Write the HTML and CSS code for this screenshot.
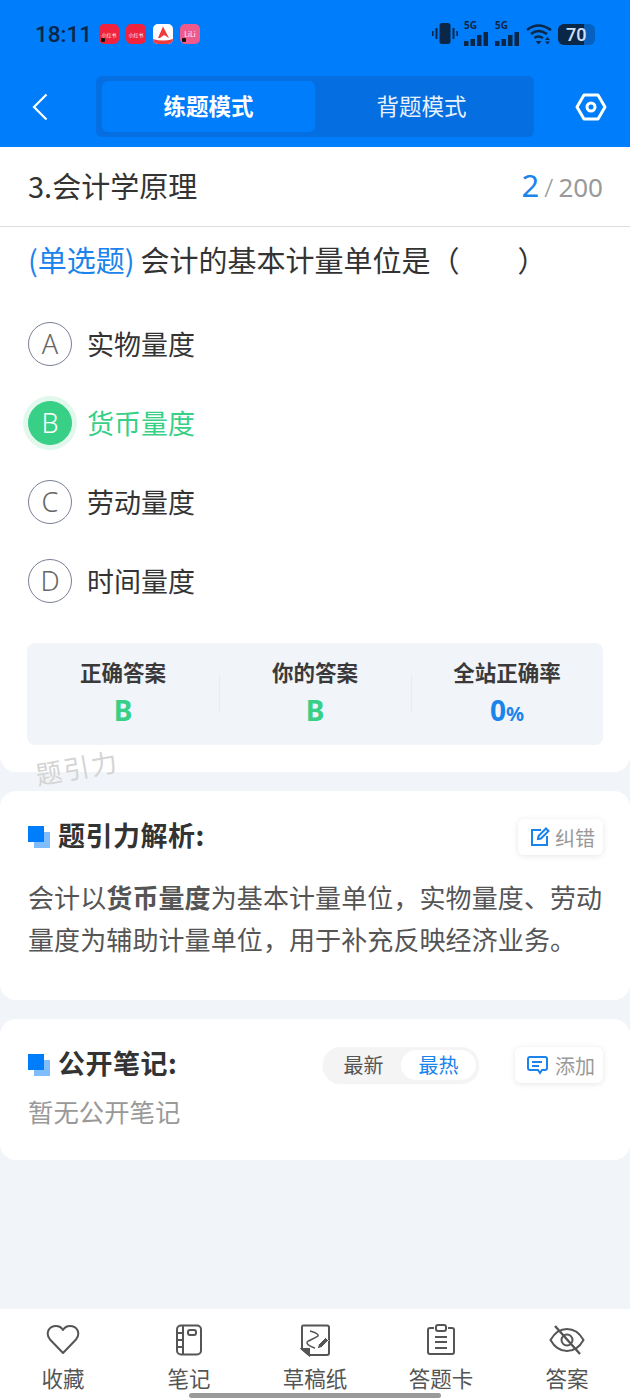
FILE: index.html
```html
<!DOCTYPE html>
<html lang="zh-CN">
<head>
    <meta charset="UTF-8">
    <meta name="viewport" content="width=device-width, initial-scale=1.0">
    <title>题引力</title>
    <link rel="stylesheet" href="styles.css">
</head>
<body>
<div class="page">
    <header class="top">
        <div class="status-bar">
            <span class="time">18:11</span>
            <div class="app-icons">
                <span class="app red">小红书<i class="dot"></i></span>
                <span class="app red">小红书</span>
                <span class="app white">
                    <svg width="20" height="20" viewBox="0 0 20 20"><path d="M10 2.5 L16 14 L11 11 L7 14 L5 14 Z" fill="#ef3b3f"/><path d="M0 15 Q10 18 20 15 V20 H0Z" fill="#ef3b3f"/></svg>
                </span>
                <span class="app pink">LiLi<i class="dot"></i></span>
            </div>
            <div class="status-right">
                <svg width="26" height="22" viewBox="0 0 26 22" fill="#0b2748"><rect x="7.5" y="0" width="11" height="21" rx="2.5"/><rect x="3.5" y="5" width="2" height="11"/><rect x="0" y="8" width="1.6" height="5"/><rect x="20.5" y="5" width="2" height="11"/><rect x="24.4" y="8" width="1.6" height="5"/></svg>
                <div class="signal"><b>5G</b><svg width="25" height="14" viewBox="0 0 25 14" fill="#0b2748"><rect x="0" y="9" width="4.5" height="5"/><rect x="6.5" y="7" width="4.5" height="7"/><rect x="13" y="3" width="4.5" height="11"/><rect x="19.5" y="0" width="4.5" height="14"/></svg></div>
                <div class="signal"><b>5G</b><svg width="25" height="14" viewBox="0 0 25 14" fill="#0b2748"><rect x="0" y="9" width="4.5" height="5"/><rect x="6.5" y="7" width="4.5" height="7"/><rect x="13" y="3" width="4.5" height="11"/><rect x="19.5" y="0" width="4.5" height="14"/></svg></div>
                <svg width="26" height="22" viewBox="0 0 26 22" fill="none" stroke="#0b2748" stroke-width="2.6"><path d="M1 7 Q12 -2 25 7"/><path d="M5 11 Q12 5 21 11"/><path d="M8.5 15 Q12 12 17 15"/><path d="M9.5 18 H15.5 L12.5 21.5Z" fill="#0b2748" stroke="none"/><path d="M19 17 l2.5 -3 l2.5 3Z M19 18.5 l2.5 3 l2.5 -3Z" fill="#0b2748" stroke="none"/></svg>
                <div class="battery"><span class="battery-level"></span><span class="battery-num">70</span></div>
            </div>
        </div>
        <nav class="nav">
            <svg class="back" width="16" height="28" viewBox="0 0 16 28" fill="none" stroke="#fff" stroke-width="2.2"><path d="M14.5 1.5 L2 14 L14.5 26.5"/></svg>
            <div class="tabs">
                <div class="tab active">练题模式</div>
                <div class="tab">背题模式</div>
            </div>
            <svg class="gear" width="32" height="28" viewBox="0 0 32 28" fill="none" stroke="#fff" stroke-width="3"><path d="M9 2 H23 L30 14 L23 26 H9 L2 14Z" stroke-linejoin="round"/><circle cx="16" cy="14" r="4"/></svg>
        </nav>
    </header>

    <section class="question-card">
        <div class="title-row">
            <span class="course">3.会计学原理</span>
            <span class="progress"><em>2</em><i>/</i>200</span>
        </div>
        <p class="stem"><span class="type">(单选题)</span>会计的基本计量单位是（&emsp;&emsp;）</p>
        <ul class="options">
            <li class="option"><span class="letter">A</span>实物量度</li>
            <li class="option correct"><span class="letter">B</span>货币量度</li>
            <li class="option"><span class="letter">C</span>劳动量度</li>
            <li class="option"><span class="letter">D</span>时间量度</li>
        </ul>
        <div class="answer-box">
            <div class="answer-col"><h4>正确答案</h4><strong class="green">B</strong></div>
            <div class="answer-col"><h4>你的答案</h4><strong class="green">B</strong></div>
            <div class="answer-col"><h4>全站正确率</h4><strong class="blue">0<small>%</small></strong></div>
        </div>
    </section>
    <div class="watermark">题引力</div>

    <section class="card analysis">
        <div class="card-head">
            <span class="square"></span>
            <h3>题引力解析:</h3>
            <div class="chip">
                <svg width="20" height="20" viewBox="0 0 20 20" fill="none" stroke="#1b84ec" stroke-width="2"><path d="M11 3 H2 V18 H17 V9"/><path d="M8 12 L8.5 9 L16 1.5 L18.5 4 L11 11.5Z"/></svg>
                纠错
            </div>
        </div>
        <p class="analysis-text">会计以<b>货币量度</b>为基本计量单位，实物量度、劳动量度为辅助计量单位，用于补充反映经济业务。</p>
    </section>

    <section class="card notes">
        <div class="card-head">
            <span class="square"></span>
            <h3>公开笔记:</h3>
            <div class="switch"><span>最新</span><span class="on">最热</span></div>
            <div class="chip chip-wide">
                <svg width="21" height="20" viewBox="0 0 21 20" fill="none" stroke="#1b84ec" stroke-width="2"><path d="M3 2 H18 Q20 2 20 4 V13 Q20 15 18 15 H15 L13 18 L11 15 H3 Q1 15 1 13 V4 Q1 2 3 2Z"/><path d="M5 7 H15 M5 11 H12"/></svg>
                添加
            </div>
        </div>
        <p class="empty">暂无公开笔记</p>
    </section>

    <footer class="bottom-bar">
        <div class="bar-item">
            <svg width="34" height="32" viewBox="0 0 34 32" fill="none" stroke="#555" stroke-width="2"><path d="M17 29 L4 15.5 C-1 9 3 2 10 2 C13 2 15.5 3.5 17 6 C18.5 3.5 21 2 24 2 C31 2 35 9 30 15.5Z" stroke-linejoin="round"/></svg>
            <span>收藏</span>
        </div>
        <div class="bar-item">
            <svg width="28" height="32" viewBox="0 0 28 32" fill="none" stroke="#555" stroke-width="2"><rect x="2" y="1.5" width="24" height="29" rx="4"/><path d="M8 1.5 V30.5 M2 9 H8 M2 16 H8 M2 23 H8"/><rect x="13" y="6" width="8" height="5" rx="2"/></svg>
            <span>笔记</span>
        </div>
        <div class="bar-item">
            <svg width="30" height="32" viewBox="0 0 30 32" fill="none" stroke="#555" stroke-width="2"><path d="M3 1.5 H27 Q29 1.5 29 3.5 V29 Q29 31 27 31 H9 L2 25 V3 Q2 1.5 3 1.5Z"/><path d="M2 25 H9 V31Z" fill="#555"/><path d="M10 7 C14 8 19 10 18 12 C14 15 6 17 7 19 C8 22 12 23 15 24" stroke-width="1.5"/><path d="M17 25 L18.5 20.5 L25.5 13.5 L28.5 16.5 L21.5 23.5Z" fill="#555" stroke="#fff" stroke-width="1"/></svg>
            <span>草稿纸</span>
        </div>
        <div class="bar-item">
            <svg width="28" height="32" viewBox="0 0 28 32" fill="none" stroke="#555" stroke-width="2"><path d="M7 4 H3 Q1 4 1 6 V28 Q1 30 3 30 H25 Q27 30 27 28 V6 Q27 4 25 4 H21"/><rect x="9" y="1" width="10" height="6" rx="2"/><path d="M8 13 H20 M8 18 H20 M8 24 H20"/></svg>
            <span>答题卡</span>
        </div>
        <div class="bar-item">
            <svg width="36" height="30" viewBox="0 0 36 30" fill="none" stroke="#555" stroke-width="2"><path d="M1.5 15 C6 7 12 4 18 4 C24 4 30 7 34.5 15 C30 23 24 26 18 26 C12 26 6 23 1.5 15Z"/><circle cx="18" cy="15" r="5.5"/><path d="M6 1 L31 29" stroke-width="2.4"/></svg>
            <span>答案</span>
        </div>
    </footer>
    <div class="home-bar"></div>
</div>
</body>
</html>
```

FILE: styles.css
```css
* {
    box-sizing: border-box;
}

body {
    margin: 0;
    font-family: "Noto Sans CJK SC", "Noto Sans", sans-serif;
    background-color: #f1f4f8;
}

ul, p, h3, h4 {
    margin: 0;
    padding: 0;
}

.page {
    position: relative;
    width: 630px;
    height: 1400px;
    display: flex;
    flex-direction: column;
    overflow: hidden;
}

/* 顶部蓝色区域 */
.top {
    height: 147px;
    background-color: #007dfb;
    padding-top: 22px;
}

.status-bar {
    display: flex;
    align-items: center;
    height: 24px;
    padding: 0 35px 0 35px;
}

.time {
    font-family: Roboto, sans-serif;
    font-size: 22.5px;
    font-weight: 500;
    color: #0b2748;
    width: 64px;
}

.app-icons {
    display: flex;
    gap: 7px;
}

.app {
    position: relative;
    display: flex;
    align-items: center;
    justify-content: center;
    width: 20px;
    height: 20px;
    border-radius: 5px;
    overflow: hidden;
    font-size: 5px;
    line-height: 1;
    color: #fff;
    white-space: nowrap;
}

.red {
    background-color: #f0233f;
}

.white {
    background-color: #fff;
}

.pink {
    background-color: #ee5a8c;
    font-size: 7px;
}

.dot {
    position: absolute;
    left: 2px;
    bottom: 2px;
    width: 4px;
    height: 4px;
    background-color: #111;
    border-radius: 1px;
}

.status-right {
    margin-left: auto;
    display: flex;
    align-items: center;
    gap: 6px;
}

.signal {
    display: flex;
    flex-direction: column;
    width: 25px;
    height: 24px;
    position: relative;
    justify-content: flex-end;
}

.signal b {
    position: absolute;
    top: -2px;
    left: 0;
    font-family: "Noto Sans", sans-serif;
    font-size: 10px;
    line-height: 11px;
    color: #0b2748;
}

.battery {
    position: relative;
    width: 37px;
    height: 21px;
    border-radius: 6px;
    background-color: #0560c0;
    overflow: hidden;
}

.battery-level {
    position: absolute;
    left: 0;
    top: 0;
    bottom: 0;
    width: 26px;
    background-color: #0b2748;
}

.battery-num {
    position: absolute;
    left: 8px;
    top: 0;
    font-family: Roboto, sans-serif;
    font-size: 18px;
    font-weight: 500;
    line-height: 21px;
    color: #cfe0f5;
}

.nav {
    display: flex;
    align-items: center;
    margin-top: 30px;
    padding-left: 32px;
}

.back {
    margin-right: 48px;
}

.tabs {
    display: flex;
    width: 438px;
    height: 61px;
    padding: 5px 6px;
    background-color: #056ee0;
    border-radius: 6px;
}

.tab {
    flex: 1;
    display: flex;
    align-items: center;
    justify-content: center;
    padding-bottom: 3px;
    font-size: 22.5px;
    color: #e8f2ff;
    border-radius: 6px;
}

.tab.active {
    background-color: #007dfb;
    color: #fff;
    font-weight: 700;
}

.gear {
    margin-left: 41px;
}

/* 题目卡片 */
.question-card {
    height: 625px;
    background-color: #fff;
    border-radius: 0 0 16px 16px;
    padding-bottom: 27px;
}

.title-row {
    display: flex;
    align-items: center;
    justify-content: space-between;
    height: 80px;
    padding: 0 27px 3px 28px;
    border-bottom: 1px solid #dddddd;
}

.course {
    font-size: 29px;
    color: #333;
}

.progress {
    font-family: "Noto Sans", sans-serif;
    font-size: 26px;
    color: #999;
}

.progress em {
    font-style: normal;
    font-size: 31px;
    color: #1b84ec;
}

.progress i {
    font-style: normal;
    font-weight: 300;
    margin: 0 5px;
}

.stem {
    padding: 9px 28px 0;
    font-size: 29px;
    line-height: 46px;
    color: #333;
}

.type {
    color: #1b84ec;
    margin-right: 6px;
}

.options {
    list-style: none;
    margin-top: 22px;
    padding: 0 28px;
}

.option {
    display: flex;
    align-items: center;
    height: 79px;
    gap: 15px;
    font-size: 27px;
    color: #333;
}

.letter {
    display: flex;
    align-items: center;
    justify-content: center;
    width: 44px;
    height: 44px;
    border-radius: 50%;
    border: 1.5px solid #7a7f95;
    font-family: "Noto Sans", sans-serif;
    font-size: 27px;
    font-weight: 300;
    color: #666;
}

.option.correct {
    color: #38cf86;
}

.correct .letter {
    background-color: #38cf86;
    border-color: #38cf86;
    color: #fff;
    box-shadow: 0 0 0 5px #e2f8ec;
}

.answer-box {
    display: flex;
    margin: 23px 27px 0;
    height: 102px;
    padding-top: 13px;
    background-color: #f1f4f8;
    border-radius: 8px;
}

.answer-col {
    position: relative;
    flex: 1;
    display: flex;
    flex-direction: column;
    align-items: center;
}

/* 列之间的细分隔线 */
.answer-col + .answer-col::before {
    content: "";
    position: absolute;
    left: 0;
    top: 19px;
    width: 1px;
    height: 37px;
    background-color: #e8ebef;
}

.answer-col h4 {
    font-size: 21.5px;
    line-height: 32px;
    font-weight: 700;
    color: #3a3a3a;
}

.answer-col strong {
    margin-top: 3px;
    font-family: "Noto Sans", sans-serif;
    font-size: 28px;
    line-height: 38px;
    font-weight: 700;
}

.answer-col small {
    font-size: 20px;
}

.green {
    color: #38cf86;
}

.blue {
    color: #1b84ec;
}

.watermark {
    position: absolute;
    left: 35px;
    top: 748px;
    font-size: 26px;
    letter-spacing: 2px;
    color: #d4d4d4;
    transform: rotate(-10deg);
}

/* 解析、笔记 */
.card {
    margin-top: 19px;
    background-color: #fff;
    border-radius: 16px;
    padding: 0 27px 0 28px;
}

.analysis {
    height: 209px;
    padding-top: 28px;
}

.notes {
    height: 141px;
    padding-top: 28px;
}

.card-head {
    display: flex;
    align-items: center;
    height: 36px;
}

/* 标题前的两个叠放方块 */
.square {
    position: relative;
    width: 22px;
    height: 22px;
    margin-right: 8px;
    background: linear-gradient(#7fbdfc, #7fbdfc) 6px 6px / 16px 16px no-repeat;
}

.square::before {
    content: "";
    position: absolute;
    left: 0;
    top: 0;
    width: 16px;
    height: 16px;
    background-color: #007dfb;
}

.card-head h3 {
    padding-bottom: 4px;
    font-size: 27px;
    line-height: 36px;
    font-weight: 700;
    color: #333;
    letter-spacing: 0.5px;
}

.chip {
    margin-left: auto;
    display: flex;
    align-items: center;
    gap: 5px;
    height: 36px;
    padding: 0 8px 0 12px;
    font-size: 20px;
    color: #999;
    background-color: #fff;
    border-radius: 6px;
    box-shadow: 0 1px 6px rgba(0, 0, 0, 0.1);
}

.chip-wide {
    gap: 7px;
}

.switch {
    display: flex;
    align-items: center;
    height: 36px;
    margin-left: auto;
    padding: 3px;
    background-color: #f4f4f4;
    border-radius: 18px;
    font-size: 20px;
    color: #555;
    box-shadow: 0 1px 2px rgba(0, 0, 0, 0.06);
}

.switch span {
    width: 75px;
    text-align: center;
    line-height: 30px;
    border-radius: 15px;
}

.switch .on {
    background-color: #fff;
    color: #1b84ec;
}

.switch + .chip {
    margin-left: 36px;
}

.analysis-text {
    margin-top: 21px;
    font-size: 26px;
    line-height: 42px;
    letter-spacing: 0.1px;
    color: #555;
}

.analysis-text b {
    font-weight: 700;
}

.empty {
    margin-top: 9px;
    font-size: 25.4px;
    line-height: 38px;
    color: #999;
}

/* 底部工具栏 */
.bottom-bar {
    margin-top: auto;
    display: flex;
    justify-content: space-between;
    height: 91px;
    padding: 14px 0 0;
    background-color: #fff;
}

.bar-item {
    flex: 1;
    display: flex;
    flex-direction: column;
    align-items: center;
    font-size: 21.5px;
    color: #555;
}

.bar-item svg {
    height: 34px;
}

.bar-item span {
    margin-top: 5px;
    line-height: 32px;
}

.home-bar {
    position: absolute;
    left: 189px;
    bottom: 2px;
    width: 252px;
    height: 5px;
    border-radius: 3px;
    background-color: #9a9a9a;
}
```
